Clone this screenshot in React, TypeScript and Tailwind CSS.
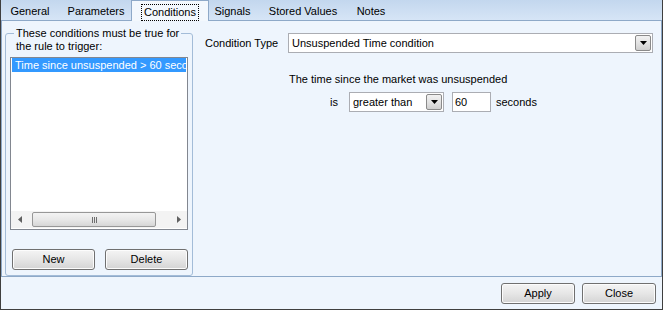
import React from 'react';

const DownTri = () => (
  <svg width="7" height="4" viewBox="0 0 7 4">
    <polygon points="0,0 7,0 3.5,4" fill="#000" />
  </svg>
);

const DropButton = () => (
  <div className="w-[16px] h-[16px] mr-[1px] border border-[#8a8a8a] rounded-[2px] bg-gradient-to-b from-[#f2f2f2] via-[#e3e3e3] to-[#cfcfcf] flex items-center justify-center">
    <DownTri />
  </div>
);

const Button = ({ label, w }: { label: string; w: string }) => (
  <button
    className={`${w} h-[21px] border border-[#707070] rounded-[3px] bg-gradient-to-b from-[#f4f4f4] via-[#e6e6e6] to-[#d4d4d4] shadow-[inset_0_0_0_1px_#fcfcfc] text-[11px] leading-[13px] text-black`}
  >
    {label}
  </button>
);

export default function App() {
  return (
    <div className="w-[663px] h-[310px] flex flex-col bg-[#eef5fd] border-x border-b border-[#3f3f3f] font-['Liberation_Sans',Arial,sans-serif] text-[11px] leading-[13px] text-black">
      {/* Tabs */}
      <div className="relative z-10 h-[20px] flex bg-gradient-to-b from-[#c3d7ee] to-[#d6e5f6]">
        <div className="w-[58px] h-full flex items-center justify-center pt-[2px]">General</div>
        <div className="w-[74px] h-full flex items-center justify-center pt-[2px]">Parameters</div>
        <div className="relative w-[74px] h-full">
          <div className="absolute -left-[2px] -right-[2px] top-0 -bottom-[1px] bg-[#f3f8fd] border-x border-t border-[#8ea9c8] flex items-center justify-center pt-[2px]">
            <span className="border border-dotted border-black px-[2px] py-[1px]">Conditions</span>
          </div>
        </div>
        <div className="w-[51px] h-full flex items-center justify-center pt-[2px]">Signals</div>
        <div className="w-[90px] h-full flex items-center justify-center pt-[2px]">Stored Values</div>
        <div className="w-[46px] h-full flex items-center justify-center pt-[2px]">Notes</div>
      </div>

      {/* Tab page */}
      <div className="h-[257px] flex border border-[#8ea9c8] bg-[#eef5fd]">
        {/* Group box */}
        <div className="ml-[3px] mt-[12px] w-[188px] h-[243px] flex flex-col border border-[#a3bcd8] rounded-[3px]">
          <div className="-mt-[7px] ml-[8px]">
            <span className="bg-[#eef5fd] px-[2px] box-decoration-clone">
              These conditions must be true for
              <br />
              the rule to trigger:
            </span>
          </div>

          <div className="mt-[4px] ml-[4px] w-[178px] h-[173px] flex flex-col bg-white border border-[#828790]">
            <div className="ml-[1px] mr-[1px] h-[14px] pl-[3px] bg-[#3399ff] text-white whitespace-nowrap overflow-hidden leading-[14px]">
              Time since unsuspended &gt; 60 seconds
            </div>

            {/* Horizontal scrollbar */}
            <div className="mt-auto mb-[1px] h-[17px] flex items-center bg-[#f3f3f3]">
              <div className="w-[17px] h-full flex items-center justify-center">
                <svg width="4" height="7" viewBox="0 0 4 7">
                  <polygon points="4,0 4,7 0,3.5" fill="#606060" />
                </svg>
              </div>
              <div className="ml-[4px] w-[124px] h-[15px] border border-[#979797] rounded-[2px] bg-gradient-to-b from-[#f3f3f3] via-[#e8e8e8] to-[#d6d6d6] flex items-center justify-center gap-[1px]">
                <div className="w-[1px] h-[6px] bg-[#6e6e6e]" />
                <div className="w-[1px] h-[6px] bg-[#6e6e6e]" />
                <div className="w-[1px] h-[6px] bg-[#6e6e6e]" />
              </div>
              <div className="flex-1" />
              <div className="w-[17px] h-full flex items-center justify-center">
                <svg width="4" height="7" viewBox="0 0 4 7">
                  <polygon points="0,0 0,7 4,3.5" fill="#606060" />
                </svg>
              </div>
            </div>
          </div>

          <div className="mt-auto mb-[5px] ml-[6px] flex gap-[10px]">
            <Button label="New" w="w-[83px]" />
            <Button label="Delete" w="w-[83px]" />
          </div>
        </div>

        {/* Condition editor */}
        <div className="flex-1 flex flex-col pl-[12px] pt-[12px]">
          <div className="h-[20px] flex items-center">
            <div className="w-[83px]">Condition Type</div>
            <div className="w-[365px] h-[20px] flex items-center justify-between bg-white border border-[#abadb3]">
              <span className="pl-[3px]">Unsuspended Time condition</span>
              <DropButton />
            </div>
          </div>

          <div className="mt-[20px] ml-[84px]">The time since the market was unsuspended</div>

          <div className="mt-[6px] ml-[125px] h-[20px] flex items-center">
            <div className="w-[19px]">is</div>
            <div className="w-[95px] h-[20px] flex items-center justify-between bg-white border border-[#abadb3]">
              <span className="pl-[3px]">greater than</span>
              <DropButton />
            </div>
            <div className="ml-[8px] w-[39px] h-[20px] flex items-center pl-[2px] bg-white border border-[#abadb3]">60</div>
            <div className="ml-[5px]">seconds</div>
          </div>
        </div>
      </div>

      {/* Dialog buttons */}
      <div className="flex-1 flex items-center justify-end gap-[7px] pr-[6px]">
        <Button label="Apply" w="w-[74px]" />
        <Button label="Close" w="w-[74px]" />
      </div>
    </div>
  );
}
